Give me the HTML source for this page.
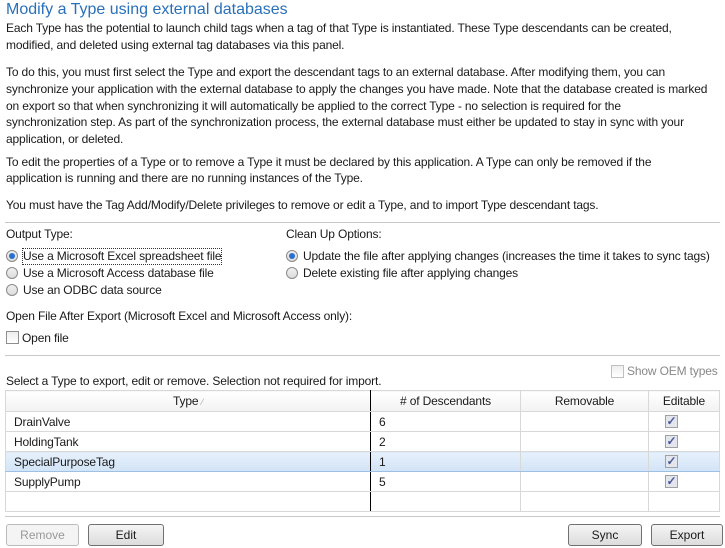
<!DOCTYPE html>
<html><head><style>
body{margin:0;width:725px;height:548px;background:#fff;font-family:"Liberation Sans",sans-serif;font-size:12px;color:#1a1a1a;position:relative;overflow:hidden}
.t{position:absolute;white-space:nowrap;letter-spacing:-0.15px;line-height:15px}
.title{position:absolute;left:6px;top:1px;font-size:16px;color:#2a70b8;white-space:nowrap}
.hr{position:absolute;left:5px;right:5px;height:1px;background:#c8c8c8}
.rad{position:absolute;width:10px;height:10px;border:1px solid #8a8a8a;border-radius:50%;background:linear-gradient(#f0f0f0,#dcdcdc)}
.rad.on::after{content:"";position:absolute;left:2px;top:2px;width:6px;height:6px;border-radius:50%;background:#2b6fd0}
.cb{position:absolute;width:11px;height:11px;border:1px solid #8f8f8f;background:linear-gradient(#eee,#fff)}
.ck{position:absolute;width:11px;height:11px;border:1px solid #a0a0a0;background:#e4e6ee;font-size:12px;font-weight:bold;line-height:11px;text-align:center;color:#4a5a9a}
table{position:absolute;left:5px;top:390px;width:715px;border-collapse:collapse;font-size:12px}
td,th{border:1px solid #d8d8d8;height:19px;padding:0 0 0 8px;font-weight:normal;text-align:left;letter-spacing:-0.15px}
th{background:linear-gradient(#fff,#f2f2f2);text-align:center;height:20px;padding:0}
tr.sel td{background:linear-gradient(#e6f0fb,#d2e4f7);border-top:1px solid #9fc0e6;border-bottom:1px solid #9fc0e6}
.btn{position:absolute;top:524px;height:20px;border:1px solid #707070;border-radius:3px;background:linear-gradient(#f5f5f5,#dcdcdc);text-align:center;line-height:20px;font-size:12px}
</style></head><body>
<div class="title">Modify a Type using external databases</div>
<div class="t" style="left:6px;top:21px">Each Type has the potential to launch child tags when a tag of that Type is instantiated. These Type descendants can be created,</div>
<div class="t" style="left:6px;top:38px">modified, and deleted using external tag databases via this panel.</div>
<div class="t" style="left:6px;top:65px">To do this, you must first select the Type and export the descendant tags to an external database. After modifying them, you can</div>
<div class="t" style="left:6px;top:82px">synchronize your application with the external database to apply the changes you have made. Note that the database created is marked</div>
<div class="t" style="left:6px;top:99px">on export so that when synchronizing it will automatically be applied to the correct Type - no selection is required for the</div>
<div class="t" style="left:6px;top:115px">synchronization step. As part of the synchronization process, the external database must either be updated to stay in sync with your</div>
<div class="t" style="left:6px;top:132px">application, or deleted.</div>
<div class="t" style="left:6px;top:155px">To edit the properties of a Type or to remove a Type it must be declared by this application. A Type can only be removed if the</div>
<div class="t" style="left:6px;top:171px">application is running and there are no running instances of the Type.</div>
<div class="t" style="left:6px;top:198px">You must have the Tag Add/Modify/Delete privileges to remove or edit a Type, and to import Type descendant tags.</div>
<div class="hr" style="top:222px"></div>
<div class="t" style="left:6px;top:227px">Output Type:</div>
<div class="rad on" style="left:6px;top:250px"></div><div class="t" style="left:23px;top:249px;outline:1px dotted #333">Use a Microsoft Excel spreadsheet file</div>
<div class="rad" style="left:6px;top:267px"></div><div class="t" style="left:23px;top:266px">Use a Microsoft Access database file</div>
<div class="rad" style="left:6px;top:284px"></div><div class="t" style="left:23px;top:283px">Use an ODBC data source</div>
<div class="t" style="left:286px;top:227px">Clean Up Options:</div>
<div class="rad on" style="left:286px;top:250px"></div><div class="t" style="left:303px;top:249px">Update the file after applying changes (increases the time it takes to sync tags)</div>
<div class="rad" style="left:286px;top:267px"></div><div class="t" style="left:303px;top:266px">Delete existing file after applying changes</div>
<div class="t" style="left:6px;top:309px">Open File After Export (Microsoft Excel and Microsoft Access only):</div>
<div class="cb" style="left:6px;top:331px"></div><div class="t" style="left:22px;top:331px">Open file</div>
<div class="hr" style="top:355px"></div>
<div class="cb" style="left:611px;top:365px;border-color:#c0c0c0"></div><div class="t" style="left:627px;top:364px;color:#888">Show OEM types</div>
<div class="t" style="left:6px;top:374px">Select a Type to export, edit or remove. Selection not required for import.</div>
<table>
<tr><th style="width:364px;border-right:1px solid #000">Type <span style="color:#aaa;font-size:9px">⁄</span></th><th style="width:149px">#&nbsp;of Descendants</th><th style="width:127px">Removable</th><th>Editable</th></tr>
<tr><td style="border-right:1px solid #000">DrainValve</td><td>6</td><td></td><td style="position:relative"><span class="ck" style="left:16px;top:3px">✓</span></td></tr>
<tr><td style="border-right:1px solid #000">HoldingTank</td><td>2</td><td></td><td style="position:relative"><span class="ck" style="left:16px;top:3px">✓</span></td></tr>
<tr class="sel"><td style="border-right:1px solid #000">SpecialPurposeTag</td><td>1</td><td></td><td style="position:relative"><span class="ck" style="left:16px;top:3px">✓</span></td></tr>
<tr><td style="border-right:1px solid #000">SupplyPump</td><td>5</td><td></td><td style="position:relative"><span class="ck" style="left:16px;top:3px">✓</span></td></tr>
<tr><td style="border-right:1px solid #000;height:16px"></td><td></td><td></td><td></td></tr>
</table>
<div class="hr" style="top:516px"></div>
<div class="btn" style="left:6px;width:71px;color:#999;border-color:#bbb;background:#f4f4f4">Remove</div>
<div class="btn" style="left:88px;width:74px">Edit</div>
<div class="btn" style="left:568px;width:72px">Sync</div>
<div class="btn" style="left:651px;width:70px">Export</div>
</body></html>
